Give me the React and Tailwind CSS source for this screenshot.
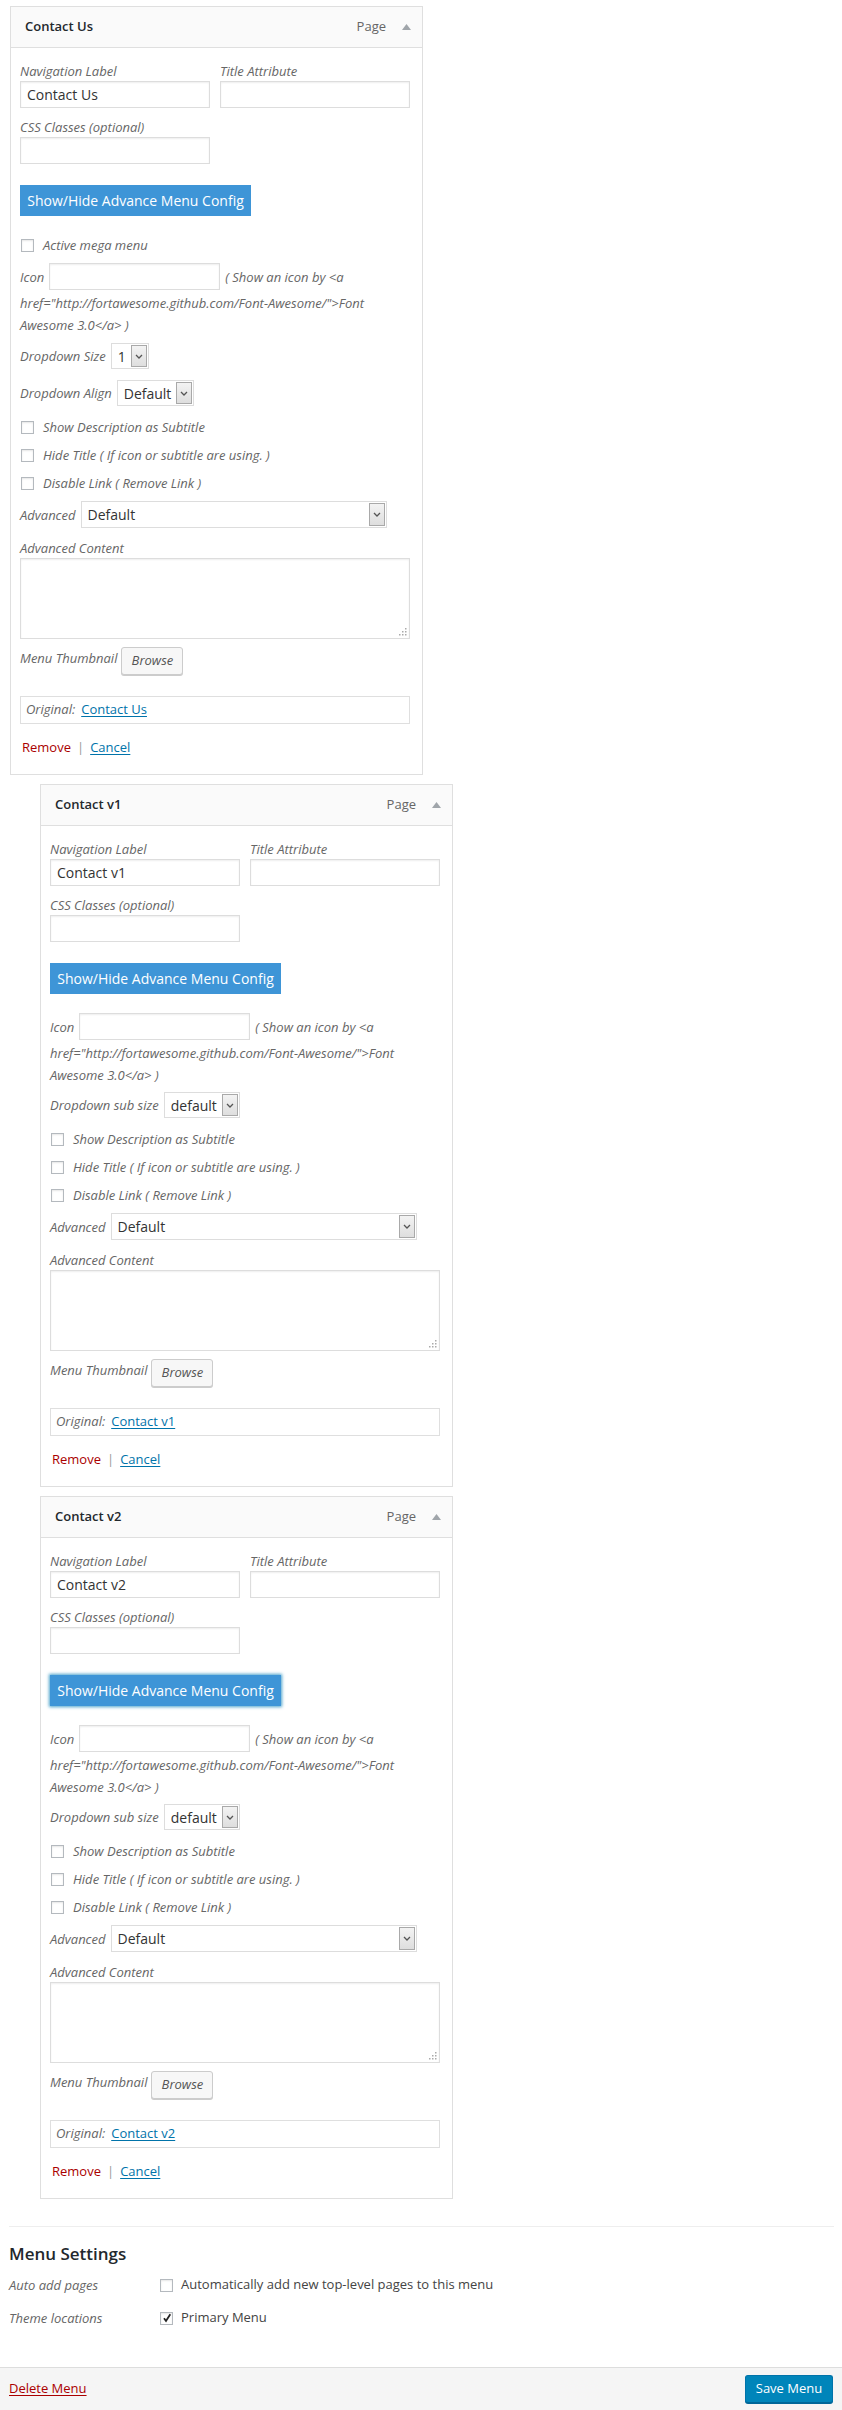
import React from "react";

const label = "italic text-[13px] leading-[20px] text-[#666]";
const input = "h-[27px] border border-[#ddd] bg-white shadow-[inset_0_1px_2px_rgba(0,0,0,0.07)]";

function Checkbox({ checked }) {
  return (
    <span className="flex h-[13px] w-[13px] shrink-0 items-center justify-center border border-[#b4b9be] bg-white shadow-[inset_0_1px_2px_rgba(0,0,0,0.1)]">
      {checked && (
        <svg width="10" height="10" viewBox="0 0 10 10">
          <path d="M2 5.2 L4 8 L8.3 1.2" fill="none" stroke="#222" strokeWidth="1.8" />
        </svg>
      )}
    </span>
  );
}

function Select({ value, className }) {
  return (
    <div className={`flex h-[26px] items-stretch border border-[#ddd] bg-white ${className}`}>
      <span className="flex flex-1 items-center pl-[6px] text-[14px] text-[#333]">{value}</span>
      <span className="m-px flex w-[16px] items-center justify-center border border-[#a9a9a9] bg-gradient-to-b from-[#f3f3f3] to-[#dedede]">
        <svg width="8" height="5" viewBox="0 0 8 5">
          <path d="M1 1 L4 4 L7 1" fill="none" stroke="#555" strokeWidth="1.3" />
        </svg>
      </span>
    </div>
  );
}

function CheckRow({ children, className = "" }) {
  return (
    <div className={`flex h-[20px] items-center gap-[9px] pl-px ${className}`}>
      <Checkbox />
      <span className={label}>{children}</span>
    </div>
  );
}

function MenuItem({ title, indent, mega, sizeLabel, sizeValue, sizeClass, align, focused }) {
  return (
    <div className={`${indent ? "ml-[40px]" : "ml-[10px]"} mt-[9px] w-[413px] border border-[#dfdfdf] bg-white first:mt-0`}>
      <div className="flex h-[41px] items-center border-b border-[#dfdfdf] bg-[#fafafa] pl-[14px] pr-[11px]">
        <span className="flex-1 text-[13px] font-semibold text-[#23282d]">{title}</span>
        <span className="text-[13px] text-[#666]">Page</span>
        <svg className="ml-[16px]" width="9" height="6" viewBox="0 0 9 6">
          <path d="M4.5 0 L9 6 L0 6 Z" fill="#a0a5aa" />
        </svg>
      </div>

      <div className="pb-[16px] pl-[9px] pr-[12px] pt-[13px]">
        <div className="flex gap-[10px]">
          <div className="w-[190px]">
            <div className={label}>Navigation Label</div>
            <div className={`${input} flex items-center pl-[6px] text-[14px] text-[#333]`}>{title}</div>
          </div>
          <div className="w-[190px]">
            <div className={label}>Title Attribute</div>
            <div className={input}></div>
          </div>
        </div>

        <div className={`mt-[9px] ${label}`}>CSS Classes (optional)</div>
        <div className={`${input} w-[190px]`}></div>

        <div
          className={`mt-[21px] flex h-[31px] w-[231px] items-center justify-center bg-[#3e95d7] text-[14px] text-white ${
            focused ? "shadow-[0_0_3px_1px_rgba(30,140,190,0.8)]" : ""
          }`}
        >
          Show/Hide Advance Menu Config
        </div>

        {mega && <CheckRow className="mt-[19px]">Active mega menu</CheckRow>}

        <div className={`${mega ? "mt-[8px]" : "mt-[19px]"} flex h-[27px] items-center`}>
          <span className={label}>Icon</span>
          <div className={`${input} ml-[5px] w-[171px]`}></div>
          <span className={`ml-[5px] ${label}`}>{"( Show an icon by <a"}</span>
        </div>
        <div className="mt-[2px] italic text-[13px] leading-[22px] text-[#666]">
          <div>{'href="http://fortawesome.github.com/Font-Awesome/">Font'}</div>
          <div>{"Awesome 3.0</a> )"}</div>
        </div>

        <div className={`${mega ? "mt-[7px]" : "mt-[6px]"} flex items-center gap-[5px]`}>
          <span className={label}>{sizeLabel}</span>
          <Select value={sizeValue} className={sizeClass} />
        </div>

        {align && (
          <div className="mt-[11px] flex items-center gap-[5px]">
            <span className={label}>Dropdown Align</span>
            <Select value="Default" className="w-[77px]" />
          </div>
        )}

        <CheckRow className="mt-[11px]">Show Description as Subtitle</CheckRow>
        <CheckRow className="mt-[8px]">Hide Title ( If icon or subtitle are using. )</CheckRow>
        <CheckRow className="mt-[8px]">Disable Link ( Remove Link )</CheckRow>

        <div className="mt-[8px] flex items-center gap-[5px]">
          <span className={label}>Advanced</span>
          <Select value="Default" className="h-[27px] w-[306px]" />
        </div>

        <div className={`mt-[10px] ${label}`}>Advanced Content</div>
        <div className="relative h-[81px] w-[390px] border border-[#ddd] bg-white shadow-[inset_0_1px_2px_rgba(0,0,0,0.07)]">
          <svg className="absolute bottom-[2px] right-[2px]" width="8" height="8" viewBox="0 0 8 8">
            <rect x="6" y="0" width="1.5" height="1.5" fill="#aaa" />
            <rect x="3" y="3" width="1.5" height="1.5" fill="#aaa" />
            <rect x="6" y="3" width="1.5" height="1.5" fill="#aaa" />
            <rect x="0" y="6" width="1.5" height="1.5" fill="#aaa" />
            <rect x="3" y="6" width="1.5" height="1.5" fill="#aaa" />
            <rect x="6" y="6" width="1.5" height="1.5" fill="#aaa" />
          </svg>
        </div>

        <div className="mt-[8px] flex items-start gap-[4px]">
          <span className={`pt-px ${label}`}>Menu Thumbnail</span>
          <div className="flex h-[28px] w-[62px] items-center justify-center rounded-[3px] border border-[#ccc] bg-[#f7f7f7] text-[13px] italic text-[#555] shadow-[0_1px_0_#ccc]">
            Browse
          </div>
        </div>

        <div className="mt-[21px] flex h-[28px] w-[390px] items-center border border-[#dfdfdf] pl-[5px] text-[13px]">
          <span className="italic text-[#666]">Original:</span>
          <span className="ml-[6px] text-[#0073aa] underline underline-offset-2">{title}</span>
        </div>

        <div className="mt-[14px] flex h-[20px] items-center pl-[2px] text-[13px]">
          <span className="text-[#a00]">Remove</span>
          <span className="mx-[6px] text-[#999]">|</span>
          <span className="text-[#0073aa] underline underline-offset-2">Cancel</span>
        </div>
      </div>
    </div>
  );
}

export default function App() {
  return (
    <div className="w-[842px] bg-white font-['Open_Sans',sans-serif] text-[13px] text-[#444]">
      <div className="pt-[6px]">
        <MenuItem
          title="Contact Us"
          mega
          sizeLabel="Dropdown Size"
          sizeValue="1"
          sizeClass="w-[38px]"
          align
        />
        <MenuItem title="Contact v1" indent sizeLabel="Dropdown sub size" sizeValue="default" sizeClass="w-[76px]" />
        <MenuItem title="Contact v2" indent sizeLabel="Dropdown sub size" sizeValue="default" sizeClass="w-[76px]" focused />
      </div>

      <div className="ml-[9px] mt-[27px] w-[825px] border-t border-[#eee] pb-[39px] pt-[15px]">
        <h3 className="text-[17px] font-semibold leading-[24px] text-[#23282d]">Menu Settings</h3>
        <div className="mt-[9px] flex h-[20px] items-center">
          <span className={`w-[151px] ${label}`}>Auto add pages</span>
          <Checkbox />
          <span className="ml-[8px] text-[13px] text-[#444]">Automatically add new top-level pages to this menu</span>
        </div>
        <div className="mt-[13px] flex h-[20px] items-center">
          <span className={`w-[151px] ${label}`}>Theme locations</span>
          <Checkbox checked />
          <span className="ml-[8px] text-[13px] text-[#444]">Primary Menu</span>
        </div>
      </div>

      <div className="flex h-[44px] items-center justify-between border-y border-[#ddd] bg-[#f5f5f5] px-[9px]">
        <span className="text-[13px] text-[#a00] underline underline-offset-2">Delete Menu</span>
        <div className="flex h-[28px] w-[88px] items-center justify-center rounded-[3px] border border-[#0073aa] border-b-[#006799] bg-[#0085ba] text-[13px] text-white shadow-[0_1px_0_#006799]">
          Save Menu
        </div>
      </div>
    </div>
  );
}
